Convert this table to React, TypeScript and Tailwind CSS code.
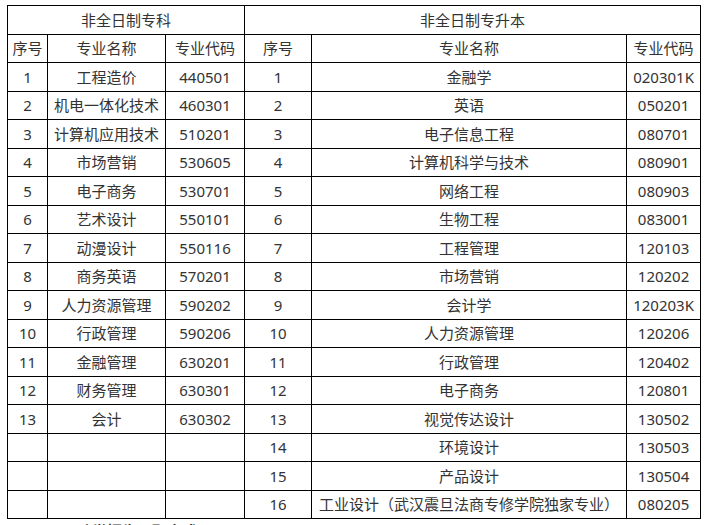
const LEFT_ROWS = [
  ['工程造价', '440501'],
  ['机电一体化技术', '460301'],
  ['计算机应用技术', '510201'],
  ['市场营销', '530605'],
  ['电子商务', '530701'],
  ['艺术设计', '550101'],
  ['动漫设计', '550116'],
  ['商务英语', '570201'],
  ['人力资源管理', '590202'],
  ['行政管理', '590206'],
  ['金融管理', '630201'],
  ['财务管理', '630301'],
  ['会计', '630302'],
]

const RIGHT_ROWS = [
  ['金融学', '020301K'],
  ['英语', '050201'],
  ['电子信息工程', '080701'],
  ['计算机科学与技术', '080901'],
  ['网络工程', '080903'],
  ['生物工程', '083001'],
  ['工程管理', '120103'],
  ['市场营销', '120202'],
  ['会计学', '120203K'],
  ['人力资源管理', '120206'],
  ['行政管理', '120402'],
  ['电子商务', '120801'],
  ['视觉传达设计', '130502'],
  ['环境设计', '130503'],
  ['产品设计', '130504'],
  ['工业设计（武汉震旦法商专修学院独家专业）', '080205'],
]

const HEAD = ['序号', '专业名称', '专业代码', '序号', '专业名称', '专业代码']

export default function App() {
  const cell = 'border border-black p-0 text-center align-middle whitespace-nowrap'

  return (
    <div
      className="min-h-[525px] bg-white pl-[7px] pt-[5px] text-[15px] text-[#333]"
      style={{ fontFamily: '"Noto Sans", "Noto Sans CJK SC", sans-serif' }}
    >
      <table className="w-[693px] table-fixed border-collapse">
        <colgroup>
          <col className="w-[40px]" />
          <col className="w-[118px]" />
          <col className="w-[79px]" />
          <col className="w-[67px]" />
          <col className="w-[315px]" />
          <col className="w-[74px]" />
        </colgroup>
        <thead>
          <tr className="h-[29px]">
            <th colSpan={3} className={`${cell} font-normal`}>
              非全日制专科
            </th>
            <th colSpan={3} className={`${cell} font-normal`}>
              非全日制专升本
            </th>
          </tr>
          <tr className="h-[28px]">
            {HEAD.map((head, i) => (
              <th key={i} className={`${cell} font-normal`}>
                {head}
              </th>
            ))}
          </tr>
        </thead>
        <tbody>
          {RIGHT_ROWS.map(([name, code], index) => {
            const left = LEFT_ROWS[index]
            return (
              <tr key={code} className={index % 2 === 0 ? 'h-[29px]' : 'h-[28px]'}>
                <td className={cell}>{left ? index + 1 : ''}</td>
                <td className={cell}>{left ? left[0] : ''}</td>
                <td className={cell}>{left ? left[1] : ''}</td>
                <td className={cell}>{index + 1}</td>
                <td className={cell}>{name}</td>
                <td className={cell}>{code}</td>
              </tr>
            )
          })}
        </tbody>
      </table>
      <div className="pl-[40px] pt-[1px] font-bold">二、助学招生录取方式</div>
    </div>
  )
}
